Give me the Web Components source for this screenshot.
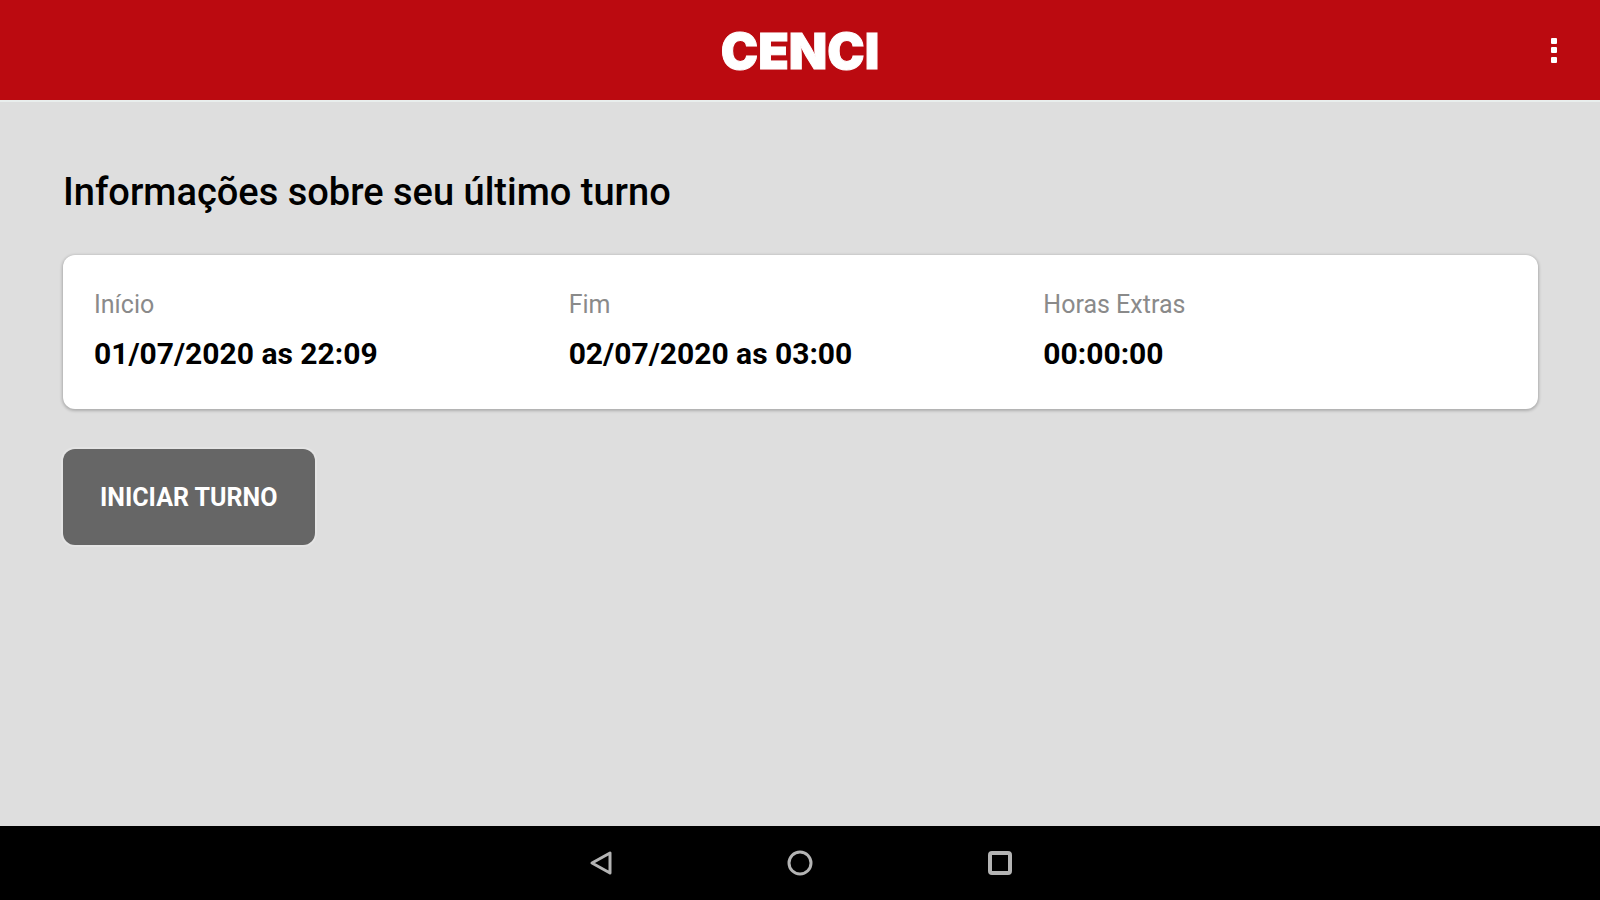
<!DOCTYPE html>
<html lang="pt-BR">
<head>
<meta charset="utf-8">
<meta name="viewport" content="width=device-width, initial-scale=1">
<title>Cenci</title>
<style>
html, body { margin: 0; height: 100%; }
body { font-family: Roboto, "Liberation Sans", sans-serif; background: #dedede; color: #000; }
</style>
</head>
<body>
<cenci-app></cenci-app>
<script>
function define(name, html) {
  const template = document.createElement('template');
  template.innerHTML = html;
  customElements.define(name, class extends HTMLElement {
    constructor() {
      super();
      this.attachShadow({ mode: 'open' }).append(template.content.cloneNode(true));
    }
  });
}

define('app-header', `
<style>
:host { display: block; background: #bb0a10; border-bottom: 2px solid #e9eeed; }
header { display: grid; grid-template-columns: 1fr auto 1fr; align-items: center; height: 100px; color: #fff; }
.brand { grid-column: 2; padding-top: 2px; font-family: Inter, Roboto, sans-serif; font-size: 50px; line-height: 60px; font-weight: 900; -webkit-text-stroke: 1px #fff; }
button { justify-self: end; display: flex; align-items: center; justify-content: center; width: 48px; height: 48px; margin-right: 22px; padding: 0; border: 0; background: none; color: inherit; }
</style>
<header>
  <span class="brand"><slot></slot></span>
  <button type="button" aria-label="Mais opções">
    <svg width="8" height="28" viewBox="0 0 8 28" fill="currentColor"><rect x="1" y="2" width="6" height="6" rx="1"/><rect x="1" y="11" width="6" height="6" rx="1"/><rect x="1" y="21" width="6" height="6" rx="1"/></svg>
  </button>
</header>`);

define('shift-field', `
<style>
:host { display: block; }
dl { margin: 0; }
dt { font-size: 25px; line-height: 32px; color: #8a8a8a; }
dd { margin: 15px 0 0; font-size: 30px; line-height: 36px; font-weight: 700; }
</style>
<dl><dt><slot name="label"></slot></dt><dd><slot></slot></dd></dl>`);

define('shift-card', `
<style>
:host { display: grid; grid-template-columns: repeat(3, 1fr); gap: 12px; padding: 34px 32px 37px 31px; background: #fff; border-radius: 12px; box-shadow: 0 1px 3px 1px rgba(0, 0, 0, .22); }
</style>
<slot></slot>`);

define('action-button', `
<style>
:host { display: block; }
button { display: block; padding: 33px 38px 31px 37px; border: 0; border-radius: 12px; background: #666; box-shadow: 0 0 0 2px #e4e4e4; color: #fff; font: 700 25px/32px Roboto, "Liberation Sans", sans-serif; }
</style>
<button type="button"><slot></slot></button>`);

define('system-nav', `
<style>
:host { display: block; background: #000; }
nav { display: flex; justify-content: center; align-items: center; gap: 152px; height: 74px; }
button { display: flex; align-items: center; justify-content: center; width: 48px; height: 48px; padding: 0; border: 0; background: none; color: #b4b4b4; }
svg { fill: none; stroke: currentColor; stroke-width: 3; stroke-linejoin: round; }
</style>
<nav aria-label="Sistema">
  <button type="button" aria-label="Voltar"><svg width="28" height="28" viewBox="0 0 28 28"><path d="M6 14 24 4V24Z"/></svg></button>
  <button type="button" aria-label="Início"><svg width="28" height="28" viewBox="0 0 28 28"><circle cx="14" cy="14" r="11"/></svg></button>
  <button type="button" aria-label="Recentes"><svg width="28" height="28" viewBox="0 0 28 28" style="stroke-width:4"><rect x="4" y="4" width="20" height="20" rx="2"/></svg></button>
</nav>`);

define('cenci-app', `
<style>
:host { display: flex; flex-direction: column; min-height: 100vh; }
main { flex: 1; padding: 66px 62px 0 63px; }
h1 { margin: 0; font-size: 38px; line-height: 48px; font-weight: 500; }
shift-card { margin-top: 39px; }
action-button { margin-top: 40px; }
</style>
<app-header>CENCI</app-header>
<main>
  <h1>Informações sobre seu último turno</h1>
  <shift-card>
    <shift-field><span slot="label">Início</span>01/07/2020 as 22:09</shift-field>
    <shift-field><span slot="label">Fim</span>02/07/2020 as 03:00</shift-field>
    <shift-field><span slot="label">Horas Extras</span>00:00:00</shift-field>
  </shift-card>
  <action-button>INICIAR TURNO</action-button>
</main>
<system-nav></system-nav>`);
</script>
</body>
</html>
